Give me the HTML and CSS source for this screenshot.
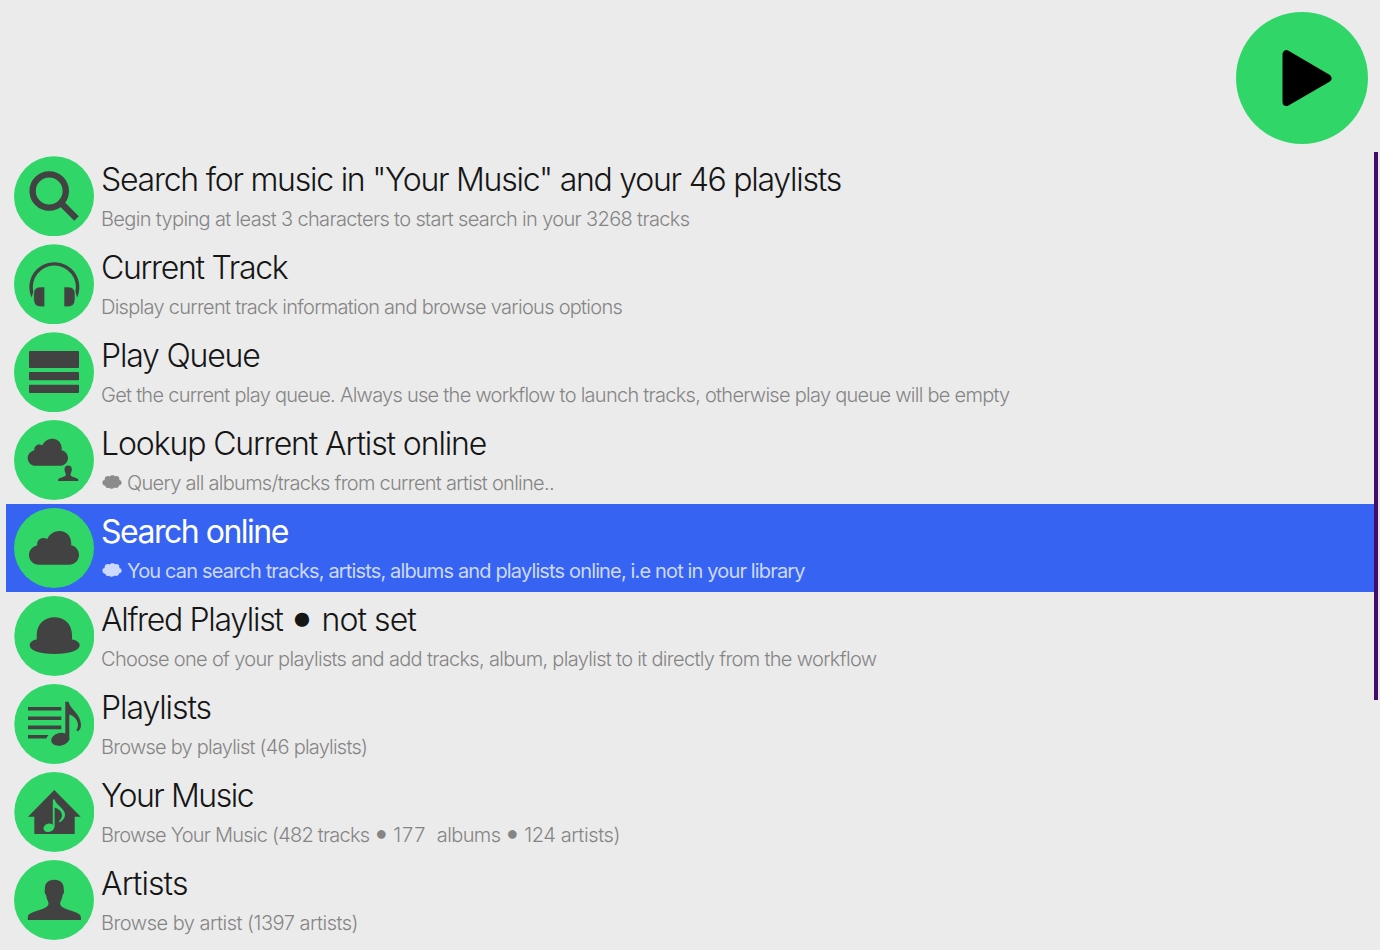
FILE: index.html
```
<!DOCTYPE html>
<html lang="en">
<head>
<meta charset="utf-8">
<title>Music</title>
<link rel="stylesheet" href="styles.css">
</head>
<body>
<header class="header">
  <svg class="play" viewBox="0 0 132 132"><circle class="disc" cx="66" cy="66" r="66"/><path class="play-arrow" d="M50.5 42.3V90L91.500 66.2Z"/></svg>
</header>
<main class="main">
  <ul class="list">
    <li class="row row-search">
      <svg class="icon" viewBox="0 0 80 80"><circle class="disc" cx="40" cy="40.300" r="40"/><g fill="none" stroke="#424242"><circle cx="35.2" cy="35" r="16.6" stroke-width="6.4"/><path d="M46.5 46.5L62.5 62.6" stroke-width="6.4"/></g></svg>
      <div class="text"><div class="title">Search for music in "Your Music" and your 46 playlists</div><div class="sub">Begin typing at least 3 characters to start search in your 3268 tracks</div></div>
    </li>
    <li class="row row-current">
      <svg class="icon" viewBox="0 0 80 80"><circle class="disc" cx="40" cy="40.300" r="40"/><g class="glyph"><path d="M17.600 53.500A25 25 0 1 1 63.100 53.500L61.400 48A21.600 21.600 0 1 0 19.300 48Z"/><path d="M30.700 43V62.700H26Q19.700 62 19.700 55.500V49.500Q20 43 26 43ZM50 43V62.700H54.700Q61 62 61 55.500V49.500Q60.700 43 54.700 43Z" stroke="#30d768" stroke-width=".6"/></g></svg>
      <div class="text"><div class="title">Current Track</div><div class="sub">Display current track information and browse various options</div></div>
    </li>
    <li class="row row-queue">
      <svg class="icon" viewBox="0 0 80 80"><circle class="disc" cx="40" cy="40.300" r="40"/><g class="glyph"><rect x="15" y="19" width="50" height="17" rx="1"/><rect x="15" y="40" width="50" height="8.300" rx="1"/><rect x="15" y="52.700" width="50" height="8.300" rx="1"/></g></svg>
      <div class="text"><div class="title">Play Queue</div><div class="sub">Get the current play queue. Always use the workflow to launch tracks, otherwise play queue will be empty</div></div>
    </li>
    <li class="row row-lookup">
      <svg class="icon" viewBox="0 0 80 80"><circle class="disc" cx="40" cy="40" r="40"/><g class="glyph"><path transform="translate(13.700 18.700) scale(.806)" d="M10 33.700C4 33.700 0 29.300 0 24C0 19.300 3.200 15.600 8.200 14.200C7.600 9 12.500 5.300 18.300 8C20.500 3 25 0 30.500 0C37.500 0 43 5.500 42.200 14.300C47 15.500 50 19.300 50 24C50 29.500 45.500 33.700 40 33.700Z"/><path transform="translate(44 45.600) scale(.382)" d="M26.700 0C20 0 16.800 4 17.200 9.500C16.500 11 17 14 18.300 15.300C19 20 20.800 21.500 20.800 24C20.800 30 2 31 .300 36.200L0 40.300H53.300L53 36.200C51 31 32.500 30 32.500 24C32.500 21.500 34.300 20 35 15.300C36.300 14 36.800 11 36 9.500C36.500 4 33 0 26.700 0Z"/></g></svg>
      <div class="text"><div class="title">Lookup Current Artist online</div><div class="sub"><svg class="cloud" viewBox="0 0 20 14"><path d="M3.500 11C-.500 10.500-.500 5 2.700 5C2 1.500 6 .200 7.700 1.600C9 0 12 0 13 1.400C15.500 .200 18 2.200 17.300 5C20.500 5.500 20.300 10 17.200 10.300C16.800 13 14 13.500 12.500 12.600C11 14.200 8 14 7.200 12.800C5.500 13.500 3.700 13 3.500 11Z"/></svg>Query all albums/tracks from current artist online..</div></div>
    </li>
    <li class="row row-online selected">
      <svg class="icon" viewBox="0 0 80 80"><circle class="disc" cx="40" cy="40" r="40"/><path class="glyph" transform="translate(15 23)" d="M10 33.700C4 33.700 0 29.300 0 24C0 19.300 3.200 15.600 8.200 14.200C7.600 9 12.500 5.300 18.300 8C20.500 3 25 0 30.500 0C37.500 0 43 5.500 42.200 14.300C47 15.500 50 19.300 50 24C50 29.500 45.500 33.700 40 33.700Z"/></svg>
      <div class="text"><div class="title">Search online</div><div class="sub"><svg class="cloud" viewBox="0 0 20 14"><path d="M3.500 11C-.500 10.500-.500 5 2.700 5C2 1.500 6 .200 7.700 1.600C9 0 12 0 13 1.400C15.500 .200 18 2.200 17.300 5C20.500 5.500 20.300 10 17.200 10.300C16.800 13 14 13.500 12.500 12.600C11 14.200 8 14 7.200 12.800C5.500 13.500 3.700 13 3.500 11Z"/></svg>You can search tracks, artists, albums and playlists online, i.e not in your library</div></div>
    </li>
    <li class="row row-alfred">
      <svg class="icon" viewBox="0 0 80 80"><circle class="disc" cx="40.300" cy="40" r="40"/><path class="glyph" d="M22.700 43.500V39C22.700 28 30.500 21.200 40.500 21.200S58 28 58 39V43.500C63 44.300 65.700 46.500 65.700 49.300C65.700 54.500 56 58 40.500 58S15.700 54.500 15.700 49.300C15.700 46.500 18 44.300 22.700 43.500Z"/></svg>
      <div class="text"><div class="title"><span>Alfred Playlist</span><span class="bullet">●</span><span class="state">not set</span></div><div class="sub">Choose one of your playlists and add tracks, album, playlist to it directly from the workflow</div></div>
    </li>
    <li class="row row-playlists">
      <svg class="icon" viewBox="0 0 80 80"><circle class="disc" cx="40.300" cy="40" r="40"/><g class="glyph"><path d="M14 23H47.300V26.600H14ZM14 32.400H47.300V36H14ZM14 41.600H47.300V45.200H14ZM14 51H34.500Q33 52.500 32.300 54.500H14Z"/><ellipse cx="46.300" cy="55.300" rx="9.200" ry="6.400" transform="rotate(-12 46.300 55.300)"/><path d="M51.300 17.700H54.500C56 25 67 30 67 41C67 44 65.500 46.500 63.500 47.300Q62 47 62.800 45.500C66 40 62.500 32.500 55.300 30.500V56H51.300Z"/></g></svg>
      <div class="text"><div class="title">Playlists</div><div class="sub">Browse by playlist (46 playlists)</div></div>
    </li>
    <li class="row row-music">
      <svg class="icon" viewBox="0 0 80 80"><circle class="disc" cx="40.300" cy="40" r="40"/><path class="glyph" d="M40.300 18L66.700 44.700H60.700V62H20.300V44.700H14Z"/><g class="disc"><ellipse cx="34.800" cy="55.800" rx="5.400" ry="4.200" transform="rotate(-15 34.800 55.800)"/><path d="M38.800 27.500H40.800C41.500 33 51 36.500 51 42.500C51 46.500 48 49.500 45.200 50.200Q44.200 49.800 45.200 49C50.500 44 48 38 40.600 35.500V55.500H38.800Z"/></g></svg>
      <div class="text"><div class="title">Your Music</div><div class="sub"><span>Browse Your Music (482 tracks</span><span class="bullet">●</span><span class="count">177</span><span class="unit">albums</span><span class="bullet">●</span><span class="artists">124 artists)</span></div></div>
    </li>
    <li class="row row-artists">
      <svg class="icon" viewBox="0 0 80 80"><circle class="disc" cx="40" cy="40" r="40"/><path class="glyph" transform="translate(13.700 19.700)" d="M26.700 0C20 0 16.800 4 17.200 9.500C16.500 11 17 14 18.300 15.300C19 20 20.800 21.500 20.800 24C20.800 30 2 31 .300 36.200L0 40.300H53.300L53 36.200C51 31 32.500 30 32.500 24C32.500 21.500 34.300 20 35 15.300C36.300 14 36.800 11 36 9.500C36.500 4 33 0 26.700 0Z"/></svg>
      <div class="text"><div class="title">Artists</div><div class="sub">Browse by artist (1397 artists)</div></div>
    </li>
  </ul>
  <div class="scrollbar"></div>
</main>
</body>
</html>
```
FILE: styles.css
```
* { box-sizing: border-box; }
body {
  margin: 0;
  height: 950px;
  overflow: hidden;
  background: #ebebeb;
  font-family: Inter, "Liberation Sans", sans-serif;
  font-weight: 300;
}
.header {
  display: flex;
  justify-content: flex-end;
  height: 152px;
  padding: 12px 12px 0 0;
}
.play { width: 132px; height: 132px; }
.play-arrow { fill: #000; stroke: #000; stroke-width: 8px; stroke-linejoin: round; }
.disc { fill: #30d768; }
.glyph { fill: #424242; }

.main { display: flex; align-items: flex-start; padding-left: 6px; }
.list { width: 1368px; margin: 0; padding: 0; list-style: none; }
.scrollbar { width: 4px; height: 548px; background: #440b68; }

.row {
  display: flex;
  align-items: flex-start;
  gap: 7px;
  height: 88px;
  padding: 4px 8px;
  color: #161616;
}
.icon { flex: none; width: 80px; height: 80px; }
.title {
  display: flex;
  height: 45px;
  font-size: 32px;
  line-height: 47px;
  white-space: pre;
}
.sub {
  display: flex;
  height: 32px;
  font-size: 20px;
  line-height: 36px;
  color: #858585;
  white-space: pre;
}
.cloud { width: 20px; height: 14px; margin: 10px 5px 0 1px; fill: #8b8b8b; }
.bullet { font-family: "DejaVu Sans", sans-serif; letter-spacing: 0; text-align: center; }
.title .bullet { width: 39px; font-size: 33px; line-height: 43px; }
.sub .bullet { width: 24px; font-size: 20px; line-height: 33px; }

.selected { background: #3663f2; color: #fff; font-weight: 400; }
.selected .sub { color: #cdd9ff; }
.selected .cloud { fill: #cdd9ff; }

.row-search .title { letter-spacing: -1.24px; }
.row-search .sub { letter-spacing: -.65px; }
.row-current .title { letter-spacing: -1.3px; }
.row-current .sub { letter-spacing: -.72px; }
.row-queue .title { letter-spacing: -1.2px; }
.row-queue .sub { letter-spacing: -.73px; }
.row-lookup .title { letter-spacing: -1.12px; }
.row-lookup .sub { letter-spacing: -.72px; }
.row-online .title { letter-spacing: -1.5px; }
.row-online .sub { letter-spacing: -.855px; }
.row-alfred .title { letter-spacing: -1.32px; }
.row-alfred .state { letter-spacing: -.95px; }
.row-alfred .sub { letter-spacing: -.68px; }
.row-playlists .title { letter-spacing: -1.08px; }
.row-playlists .sub { letter-spacing: -.78px; }
.row-music .title { letter-spacing: -1.45px; }
.row-music .sub { letter-spacing: -.78px; }
.row-music .count { width: 43.5px; letter-spacing: .8px; }
.row-music .unit { width: 63.5px; letter-spacing: -.6px; }
.row-music .artists { letter-spacing: -.4px; }
.row-artists .title { letter-spacing: -.9px; }
.row-artists .sub { letter-spacing: -.5px; }
```
